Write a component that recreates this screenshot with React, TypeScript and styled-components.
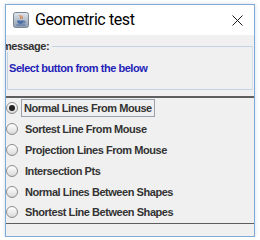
import React from 'react';
import styled, { createGlobalStyle } from 'styled-components';

const GlobalStyle = createGlobalStyle`
  html, body {
    margin: 0;
    padding: 0;
    background: #ffffff;
  }
`;

const Frame = styled.div`
  margin: 4px 0 0 5px;
  width: 250px;
  height: 233px;
  box-sizing: border-box;
  border: 1px solid #7ea9d9;
  background: #f0f0f0;
  display: flex;
  flex-direction: column;
  overflow: hidden;
  box-shadow: 0 0 4px rgba(80, 120, 170, 0.25);
`;

const TitleBar = styled.div`
  height: 30px;
  flex: none;
  background: #ffffff;
  display: flex;
  align-items: center;
  padding: 0 11px 0 7px;
  gap: 6px;
`;

const Title = styled.span`
  flex: 1;
  font-family: Roboto, 'Open Sans', sans-serif;
  font-size: 16px;
  letter-spacing: -0.4px;
  color: #000;
  margin-top: -1px;
`;

const Content = styled.div`
  flex: 1;
  display: flex;
  flex-direction: column;
  overflow: hidden;
  font-family: 'Liberation Sans', Arial, sans-serif;
  font-size: 11px;
  letter-spacing: -0.45px;
  font-weight: bold;
`;

const MessagePanel = styled.div`
  position: relative;
  margin: 11px 1px 0 1px;
  height: 44px;
  box-sizing: border-box;
  border: 1px solid #c3d3e3;
  border-right-color: #d6e1ec;
`;

const Legend = styled.span`
  position: absolute;
  left: -6px;
  top: -7px;
  padding-right: 3px;
  background: #f0f0f0;
  color: #333;
  line-height: 12px;
`;

const Message = styled.div`
  color: #2323b8;
  padding: 15px 0 0 1px;
  line-height: 12px;
`;

const Separator = styled.div<{ $weight: number; $gap: number }>`
  height: ${(p) => p.$weight}px;
  margin-top: ${(p) => p.$gap}px;
  background: #5e5e5e;
  flex: none;
`;

const Options = styled.div`
  display: flex;
  flex-direction: column;
`;

const Option = styled.label`
  height: 20.8px;
  display: flex;
  align-items: center;
  gap: 3px;
  color: #333;
`;

const Radio = styled.span<{ $checked?: boolean }>`
  width: 12px;
  height: 12px;
  box-sizing: border-box;
  border-radius: 50%;
  border: 1px solid #8c8c8c;
  background: linear-gradient(#ffffff, #d9d9d9);
  display: flex;
  align-items: center;
  justify-content: center;
  flex: none;

  &::after {
    content: '';
    width: 6px;
    height: 6px;
    border-radius: 50%;
    background: #222;
    display: ${(p) => (p.$checked ? 'block' : 'none')};
  }
`;

const OptionText = styled.span<{ $focused?: boolean }>`
  padding: 2px 2px 2px ${(p) => (p.$focused ? 2 : 3)}px;
  border: 1px solid ${(p) => (p.$focused ? '#9aa0ac' : 'transparent')};
  line-height: 12px;
`;

const JavaIcon = () => (
  <svg width="16" height="16" viewBox="0 0 16 16">
    <defs>
      <linearGradient id="jbg" x1="0" y1="0" x2="0" y2="1">
        <stop offset="0" stopColor="#dfe6ee" />
        <stop offset="1" stopColor="#8e9cad" />
      </linearGradient>
    </defs>
    <rect x="0.5" y="0.5" width="15" height="15" rx="2" fill="url(#jbg)" stroke="#7d8794" />
    <path d="M7 3 C6 4.5 9 5 7.5 7 M9 3.5 C8.5 5 10 5.5 9 7" stroke="#e0702a" strokeWidth="1" fill="none" />
    <path d="M4 8.5 H11 C11 11 9.5 12 7.5 12 C5.5 12 4 11 4 8.5 Z" fill="#4a6fa5" />
    <path d="M11 9 C13 9 13 11 10.5 11.3" stroke="#4a6fa5" strokeWidth="0.9" fill="none" />
    <rect x="3.5" y="12.5" width="9" height="1" fill="#4a6fa5" />
  </svg>
);

const CloseIcon = () => (
  <svg width="11" height="11" viewBox="0 0 11 11">
    <path d="M0.5 0.5 L10.5 10.5 M10.5 0.5 L0.5 10.5" stroke="#1a1a1a" strokeWidth="1" />
  </svg>
);

const options = [
  'Normal Lines From Mouse',
  'Sortest Line From Mouse',
  'Projection Lines From Mouse',
  'Intersection Pts',
  'Normal Lines Between Shapes',
  'Shortest Line Between Shapes',
];

export default function App() {
  return (
    <>
      <GlobalStyle />
      <Frame>
        <TitleBar>
          <JavaIcon />
          <Title>Geometric test</Title>
          <CloseIcon />
        </TitleBar>
        <Content>
          <MessagePanel>
            <Legend>message:</Legend>
            <Message>Select button from the below</Message>
          </MessagePanel>
          <Separator $weight={2} $gap={6} />
          <Options>
            {options.map((o, i) => (
              <Option key={o}>
                <Radio $checked={i === 0} />
                <OptionText $focused={i === 0}>{o}</OptionText>
              </Option>
            ))}
          </Options>
          <Separator $weight={1} $gap={0} />
        </Content>
      </Frame>
    </>
  );
}
